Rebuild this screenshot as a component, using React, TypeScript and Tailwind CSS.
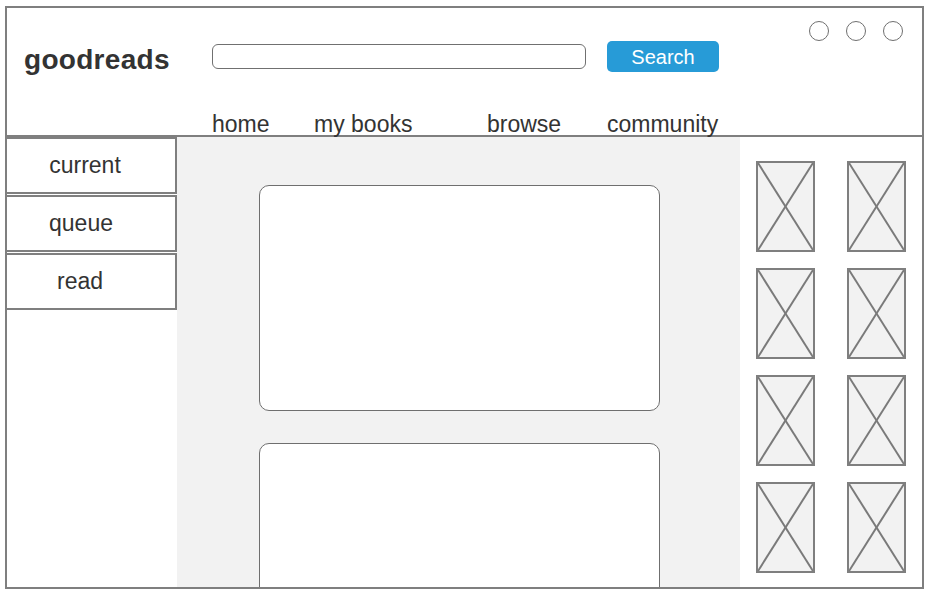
const line = "border-[#7f7f7f]";

function Thumb() {
  return (
    <div className={`relative h-[91px] w-[59px] border-2 ${line} bg-[#f2f2f2]`}>
      <svg className="h-full w-full" viewBox="0 0 100 100" preserveAspectRatio="none">
        <line x1="0" y1="0" x2="100" y2="100" stroke="#7a7a7a" strokeWidth="2" vectorEffect="non-scaling-stroke" />
        <line x1="100" y1="0" x2="0" y2="100" stroke="#7a7a7a" strokeWidth="2" vectorEffect="non-scaling-stroke" />
      </svg>
    </div>
  );
}

export default function App() {
  const shelves = [
    { label: "current", pad: "pr-[12px]" },
    { label: "queue", pad: "pr-[20px]" },
    { label: "read", pad: "pr-[22px]" },
  ];
  const nav = [
    { label: "home", w: "w-[102px]" },
    { label: "my books", w: "w-[173px]" },
    { label: "browse", w: "w-[120px]" },
    { label: "community", w: "w-auto" },
  ];

  return (
    <div
      className="h-[598px] w-[930px] bg-white pl-[5px] pt-[6px] text-[#333]"
      style={{ fontFamily: '"Liberation Sans", Arial, sans-serif' }}
    >
      <div className={`flex h-[583px] w-[919px] flex-col overflow-hidden border-2 ${line}`}>
        {/* header */}
        <div className={`flex h-[129px] shrink-0 flex-col border-b-2 ${line}`}>
          <div className="flex items-start pl-[17px] pr-[19px] pt-[13px]">
            <div className="mt-[23px] w-[188px] text-[28px] font-bold leading-[32px] tracking-[0.3px]">goodreads</div>
            <input
              type="text"
              className={`mt-[23px] h-[25px] w-[374px] rounded-[6px] border-[1.5px] border-[#707070] outline-none`}
            />
            <button className="ml-[21px] mt-[20px] h-[31px] w-[112px] rounded-[5px] bg-[#279bd7] text-[20px] leading-none text-white">
              Search
            </button>
            <div className="ml-auto flex gap-[17px]">
              <span className="h-5 w-5 rounded-full border-[1.5px] border-[#6f6f6f]" />
              <span className="h-5 w-5 rounded-full border-[1.5px] border-[#6f6f6f]" />
              <span className="h-5 w-5 rounded-full border-[1.5px] border-[#6f6f6f]" />
            </div>
          </div>
          <div className="mt-auto flex pb-[1px] pl-[205px] text-[23px] leading-[20px]">
            {nav.map((n) => (
              <span key={n.label} className={n.w}>
                {n.label}
              </span>
            ))}
          </div>
        </div>

        {/* body */}
        <div className="flex min-h-0 flex-1">
          <div className="flex w-[170px] shrink-0 flex-col gap-[1px] bg-white">
            {shelves.map((s) => (
              <div
                key={s.label}
                className={`-ml-[2px] flex h-[57px] w-[172px] items-center justify-center border-2 ${line} ${s.pad} text-[23px]`}
              >
                {s.label}
              </div>
            ))}
          </div>

          <div className="flex w-[563px] shrink-0 flex-col gap-[32px] overflow-hidden bg-[#f2f2f2] pl-[82px] pt-[48px]">
            <div className="h-[226px] w-[401px] shrink-0 rounded-[10px] border-[1.5px] border-[#6f6f6f] bg-white" />
            <div className="h-[226px] w-[401px] shrink-0 rounded-[10px] border-[1.5px] border-[#6f6f6f] bg-white" />
          </div>

          <div className="grid flex-1 grid-cols-[59px_59px] content-start gap-x-[32px] gap-y-[16px] pl-[16px] pt-[24px]">
            {Array.from({ length: 8 }).map((_, i) => (
              <Thumb key={i} />
            ))}
          </div>
        </div>
      </div>
    </div>
  );
}
